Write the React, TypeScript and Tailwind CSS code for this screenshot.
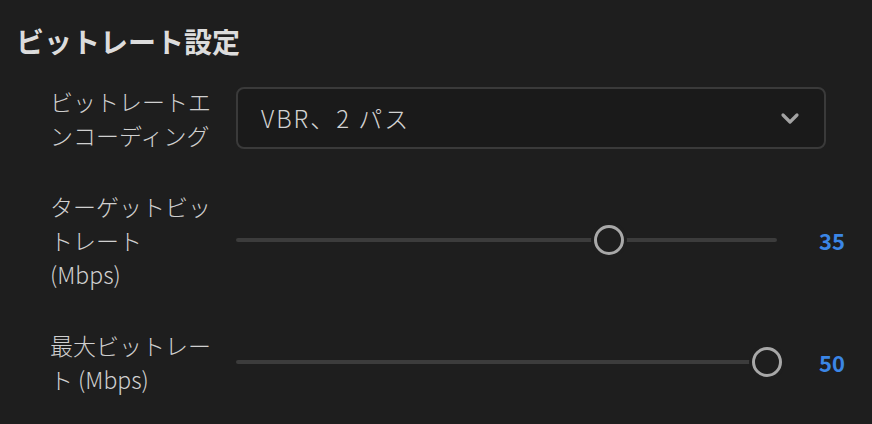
const font = { fontFamily: '"Noto Sans CJK JP", "Noto Sans", sans-serif' };

function Slider({ value, min, max }: { value: number; min: number; max: number }) {
    const pct = (value - min) / (max - min);
    return (
        <div className="flex items-center">
            <div className="relative w-[541px] h-[30px] flex items-center">
                <div className="h-[4px] w-full rounded-full bg-[#3c3c3c]" />
                <div
                    className="absolute top-0 w-[30px] h-[30px] rounded-full border-[3px] border-[#a8a8a8] bg-[#1e1e1e] shadow-[0_0_0_3px_#1e1e1e]"
                    style={{ left: `${pct * 511}px` }}
                />
            </div>
            <div className="w-[68px] text-right text-[22px] font-bold text-[#3b86e6]">{value}</div>
        </div>
    );
}

export default function App() {
    return (
        <div className="w-[872px] h-[424px] bg-[#1e1e1e] text-[#d0d0d0] pl-[16px] pt-[23px]" style={font}>
            <h2 className="text-[28px] leading-[36px] font-bold text-[#dcdcdc]">ビットレート設定</h2>

            <div className="mt-[25px] ml-[34px] flex flex-col gap-[37px] text-[23px] leading-[34px] font-light">
                <div className="flex items-center gap-[16px]">
                    <div className="w-[170px]">ビットレートエンコーディング</div>
                    <div className="w-[590px] h-[62px] rounded-[8px] border-2 border-[#3a3a3a] bg-[#1a1a1a] flex items-center justify-between pl-[23px] pr-[24px]">
                        <span className="text-[24px] tracking-[2px] text-[#d2d2d2]">VBR、2 パス</span>
                        <svg width="20" height="14" viewBox="0 0 20 14" fill="none">
                            <path d="M3 4 L10 11 L17 4" stroke="#a3a3a3" strokeWidth="3.2" strokeLinecap="round" strokeLinejoin="round" />
                        </svg>
                    </div>
                </div>

                <div className="flex items-center gap-[16px]">
                    <div className="w-[170px]">ターゲットビットレート<br />(Mbps)</div>
                    <Slider value={35} min={1} max={49.5} />
                </div>

                <div className="flex items-center gap-[16px]">
                    <div className="w-[170px]">最大ビットレート (Mbps)</div>
                    <Slider value={50} min={1} max={49.5} />
                </div>
            </div>
        </div>
    );
}
